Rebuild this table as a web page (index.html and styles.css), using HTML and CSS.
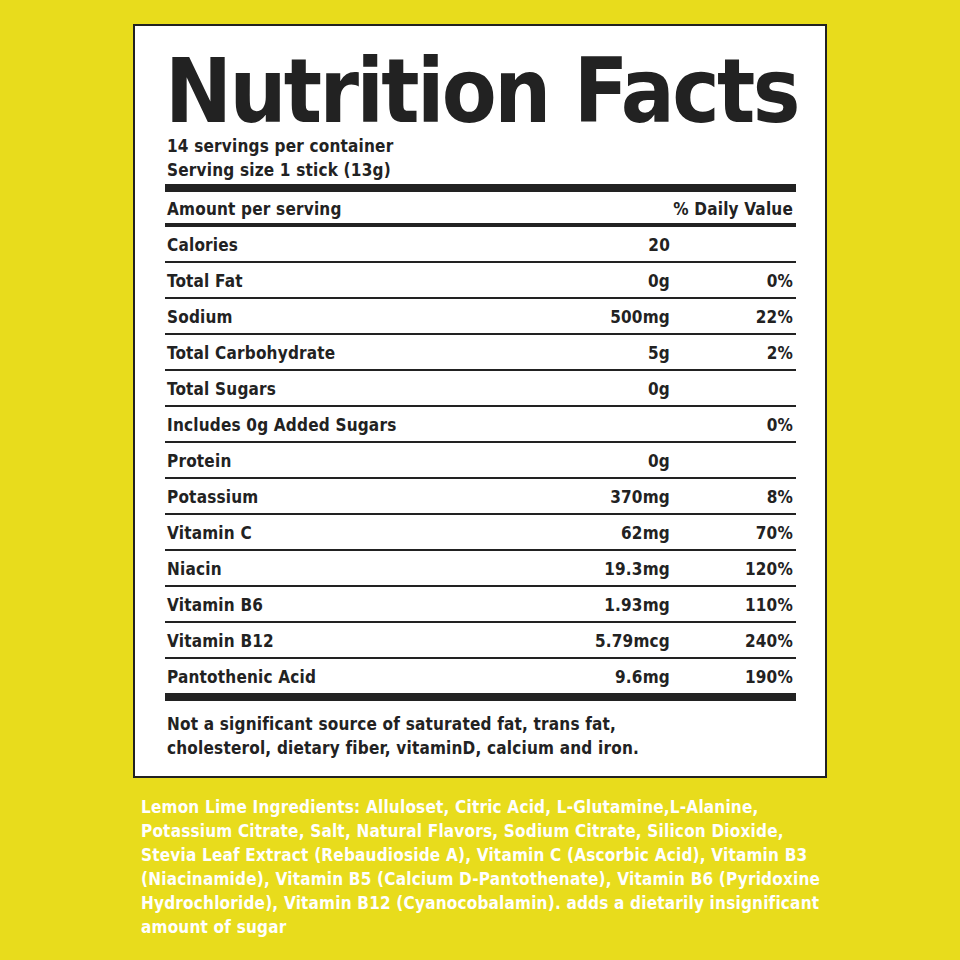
FILE: index.html
```html
<!DOCTYPE html>
<html lang="en">
<head>
<meta charset="utf-8">
<title>Nutrition Facts</title>
<link rel="stylesheet" href="styles.css">
</head>
<body>
<div class="page">
  <section class="label">
    <h1 class="title">Nutrition Facts</h1>
    <p class="servings">14 servings per container<br>Serving size 1 stick (13g)</p>
    <div class="bar bar-thick"></div>
    <div class="row row-head"><span class="name">Amount per serving</span><span class="dv">% Daily Value</span></div>
    <div class="bar bar-mid"></div>
    <div class="rows">
      <div class="row"><span class="name">Calories</span><span class="amt">20</span><span class="pct"></span></div>
      <div class="row"><span class="name">Total Fat</span><span class="amt">0g</span><span class="pct">0%</span></div>
      <div class="row"><span class="name">Sodium</span><span class="amt">500mg</span><span class="pct">22%</span></div>
      <div class="row"><span class="name">Total Carbohydrate</span><span class="amt">5g</span><span class="pct">2%</span></div>
      <div class="row"><span class="name">Total Sugars</span><span class="amt">0g</span><span class="pct"></span></div>
      <div class="row"><span class="name">Includes 0g Added Sugars</span><span class="amt"></span><span class="pct">0%</span></div>
      <div class="row"><span class="name">Protein</span><span class="amt">0g</span><span class="pct"></span></div>
      <div class="row"><span class="name">Potassium</span><span class="amt">370mg</span><span class="pct">8%</span></div>
      <div class="row"><span class="name">Vitamin C</span><span class="amt">62mg</span><span class="pct">70%</span></div>
      <div class="row"><span class="name">Niacin</span><span class="amt">19.3mg</span><span class="pct">120%</span></div>
      <div class="row"><span class="name">Vitamin B6</span><span class="amt">1.93mg</span><span class="pct">110%</span></div>
      <div class="row"><span class="name">Vitamin B12</span><span class="amt">5.79mcg</span><span class="pct">240%</span></div>
      <div class="row"><span class="name">Pantothenic Acid</span><span class="amt">9.6mg</span><span class="pct">190%</span></div>
    </div>
    <div class="bar bar-thick"></div>
    <p class="note">Not a significant source of saturated fat, trans fat,<br>cholesterol, dietary fiber, vitaminD, calcium and iron.</p>
  </section>
  <p class="ingredients">Lemon Lime Ingredients: Alluloset, Citric Acid, L-Glutamine,L-Alanine,<br>Potassium Citrate, Salt, Natural Flavors, Sodium Citrate, Silicon Dioxide,<br>Stevia Leaf Extract (Rebaudioside A), Vitamin C (Ascorbic Acid), Vitamin B3<br>(Niacinamide), Vitamin B5 (Calcium D-Pantothenate), Vitamin B6 (Pyridoxine<br>Hydrochloride), Vitamin B12 (Cyanocobalamin). adds a dietarily insignificant<br>amount of sugar</p>
</div>
</body>
</html>
```

FILE: styles.css
```css
html, body {
  margin: 0;
  padding: 0;
}
body {
  background: #e8dc1c;
  font-family: "DejaVu Sans Condensed", "DejaVu Sans", sans-serif;
  font-weight: bold;
  color: #222222;
  letter-spacing: 0.2px;
}
.page {
  width: 960px;
  height: 960px;
  padding-top: 24px;
  box-sizing: border-box;
}
.label {
  margin-left: 133px;
  width: 694px;
  box-sizing: border-box;
  border: 2px solid #222222;
  background: #ffffff;
  padding: 25px 29px 16px 30px;
}
.title {
  margin: 0;
  font-size: 89px;
  line-height: 80px;
  letter-spacing: -2.6px;
  font-weight: bold;
  white-space: nowrap;
}
.servings {
  margin: 3px 0 0;
  padding-left: 2px;
  font-size: 17px;
  line-height: 24px;
}
.bar {
  background: #222222;
}
.bar-thick {
  height: 8px;
}
.servings + .bar-thick {
  margin-top: 2px;
}
.bar-mid {
  height: 4px;
}
.row {
  display: grid;
  grid-template-columns: 1fr 120px 123px;
  align-items: center;
  padding: 1px 3px 0 2px;
  box-sizing: border-box;
  font-size: 17px;
  border-bottom: 2px solid #222222;
  height: 36px;
}
.rows .row:last-child {
  border-bottom: none;
  height: 34px;
}
.row-head {
  display: flex;
  justify-content: space-between;
  height: 31px;
  border-bottom: none;
  padding-top: 2px;
}
.amt, .pct {
  text-align: right;
}
.note {
  margin: 11px 0 0;
  padding-left: 2px;
  font-size: 17px;
  line-height: 24px;
}
.ingredients {
  margin: 17px 0 0;
  padding-left: 141px;
  color: #ffffff;
  font-size: 17px;
  line-height: 24px;
  white-space: nowrap;
}
```
